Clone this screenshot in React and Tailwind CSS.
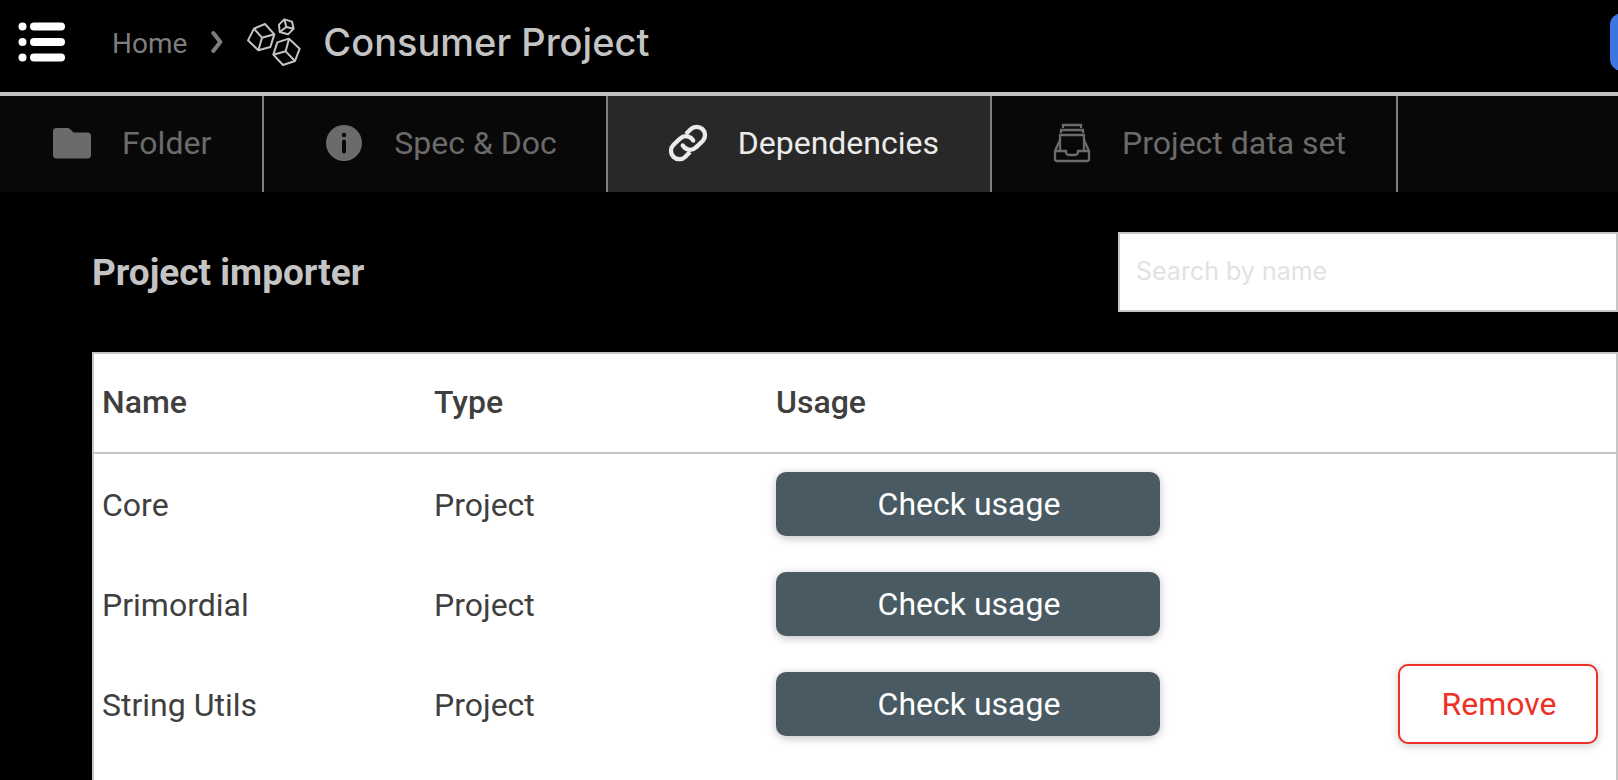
import { useState } from 'react';

const dependencies = [
  { name: 'Core', type: 'Project', removable: false },
  { name: 'Primordial', type: 'Project', removable: false },
  { name: 'String Utils', type: 'Project', removable: true },
];

const ListIcon = () => (
  <svg className="w-12 h-10" viewBox="0 0 48 40" fill="currentColor">
    <circle cx="4.5" cy="4.5" r="4" />
    <circle cx="4.5" cy="20" r="4" />
    <circle cx="4.5" cy="35.5" r="4" />
    <rect x="12" y="0.5" width="35" height="8" rx="4" />
    <rect x="12" y="16" width="35" height="8" rx="4" />
    <rect x="12" y="31.5" width="35" height="8" rx="4" />
  </svg>
);

const ChevronIcon = () => (
  <svg className="w-3 h-6" viewBox="0 0 12 24" fill="none" stroke="currentColor" strokeWidth="4" strokeLinecap="round" strokeLinejoin="round">
    <path d="M2.300 3l7 9l-7 9" />
  </svg>
);

const CubesIcon = () => (
  <svg className="w-14 h-12" viewBox="742 55 168 144" fill="none" stroke="currentColor" strokeWidth="6" strokeLinejoin="round">
    <path d="M763 87l33-14 28 31-12 38-36 10-31-30z" />
    <path d="M763 87l24 27 37-10M787 114l-11 38" />
    <path d="M868 117l32 30-14 37-36 12-29-31 12-37z" />
    <path d="M868 117l-10 38-37 10M858 155l28 29" />
    <path d="M854 59l23 7 5 21-17 17-25-7-2-22z" />
    <path d="M854 59l6 23 22 5M860 82l-20 15" />
  </svg>
);

const FolderIcon = () => (
  <svg className="w-10 h-10" viewBox="0 0 40 40" fill="currentColor">
    <path d="M4.500 5H15.500Q17 5 18 6L21.500 9.500H35.500Q39 9.500 39 13V32Q39 35.500 35.500 35.500H4.500Q1 35.500 1 32V8.500Q1 5 4.500 5z" />
  </svg>
);

const InfoIcon = () => (
  <svg className="w-10 h-10" viewBox="0 0 40 40">
    <circle cx="20" cy="20" r="18" fill="currentColor" />
    <circle cx="20" cy="12" r="2.200" fill="#080808" />
    <rect x="18" y="16.500" width="4" height="14" rx="2" fill="#080808" />
  </svg>
);

const LinkIcon = () => (
  <svg className="w-10 h-10" viewBox="54 36 120 120" fill="none" stroke="currentColor" strokeWidth="13">
    <path d="M108 69L122 55A25 25 0 0 1 158 90L138 109A25 25 0 0 1 98 103" />
    <path d="M120 123L106 137A25 25 0 0 1 70 102L90 83A25 25 0 0 1 130 89" />
    <g fill="currentColor" stroke="none">
      <circle cx="98" cy="103" r="6" />
      <circle cx="130" cy="89" r="6" />
    </g>
  </svg>
);

const TrayIcon = () => (
  <svg className="w-10 h-10" viewBox="0 0 40 40" fill="none" stroke="currentColor" strokeWidth="2.300">
    <path d="M11 5V2H29V5" />
    <path d="M9 10V7H31V10" />
    <path d="M8 28V12H32V28" />
    <path d="M8 17L3 28V36Q3 38 5 38H35Q37 38 37 36V28L32 17" />
    <path d="M3 28H14V30Q15 32 17 32H23Q25 32 26 30V28H37" />
  </svg>
);

const tabs = [
  { id: 'folder', label: 'Folder', icon: FolderIcon, padding: 'pl-[52px] pr-[51px]' },
  { id: 'spec', label: 'Spec & Doc', icon: InfoIcon, padding: 'pl-[60px] pr-[49px]' },
  { id: 'dependencies', label: 'Dependencies', icon: LinkIcon, padding: 'pl-[60px] pr-[51px]' },
  { id: 'dataset', label: 'Project data set', icon: TrayIcon, padding: 'pl-[60px] pr-[50px]' },
];

const Header = () => (
  <header className="flex items-center h-24 pb-2 pl-[18px] border-b-4 border-[#c0c2be] overflow-hidden">
    <button type="button" aria-label="Menu" className="text-white">
      <ListIcon />
    </button>
    <nav className="flex items-center flex-1 ml-[46px] text-[#7d7d7d]">
      <a href="#home" className="pt-[3px] text-[28px]">Home</a>
      <span className="ml-6"><ChevronIcon /></span>
      <span className="ml-6 text-[#c4c4c4]"><CubesIcon /></span>
      <h1 className="ml-5 font-[Inter,sans-serif] text-[38px] font-medium text-[#c4c4c4]">Consumer Project</h1>
    </nav>
    <button type="button" aria-label="Save" className="w-40 h-[58px] shrink-0 -mr-[152px] rounded-xl bg-[#3b76e1]" />
  </header>
);

const App = () => {
  const [activeTab, setActiveTab] = useState('dependencies');
  const [search, setSearch] = useState('');

  const rows = dependencies.filter((d) => d.name.toLowerCase().includes(search.toLowerCase()));

  return (
    <div className="flex flex-col h-screen overflow-hidden bg-black font-[Roboto,sans-serif] text-[32px] leading-10">
      <Header />

      {/* Tabs */}
      <div role="tablist" className="flex h-24 shrink-0 bg-[#080808]">
        {tabs.map(({ id, label, icon: Icon, padding }) => (
          <button
            key={id}
            type="button"
            role="tab"
            aria-selected={activeTab === id}
            onClick={() => setActiveTab(id)}
            className={`flex items-center gap-[30px] pb-0.5 border-r-2 border-[#808080] whitespace-nowrap ${padding} ${
              activeTab === id ? 'bg-[#282828] text-[#ebebeb]' : 'text-[#6b6b6b]'
            }`}
          >
            <Icon />
            {label}
          </button>
        ))}
      </div>

      <main className="flex flex-col flex-1 pl-[92px]">
        <div className="flex items-center justify-between py-10">
          <h2 className="pt-0.5 text-[37px] font-bold text-[#c4c4c4]">Project importer</h2>
          <input
            type="text"
            aria-label="Search by name"
            placeholder="Search by name"
            value={search}
            onChange={(e) => setSearch(e.target.value)}
            className="w-[500px] h-20 px-4 pb-0.5 border-2 border-[#c6c6c6] bg-white font-[Inter,sans-serif] text-[25px] text-[#3f3f3f] placeholder:text-[#e2e2e2] outline-none"
          />
        </div>

        {/* Dependency list */}
        <div className="flex-1 border-2 border-b-0 border-[#c6c6c6] bg-white text-[#3f3f3f]">
          <table className="w-full table-fixed border-separate border-spacing-0 text-left">
            <thead>
              <tr className="h-[100px]">
                <th className="w-[332px] pl-2 pb-0.5 border-b-2 border-[#c6c6c6] font-medium">Name</th>
                <th className="w-[350px] pl-2 pb-0.5 border-b-2 border-[#c6c6c6] font-medium">Type</th>
                <th className="pb-0.5 border-b-2 border-[#c6c6c6] font-medium">Usage</th>
                <th className="w-[300px] border-b-2 border-[#c6c6c6]" aria-label="Actions" />
              </tr>
            </thead>
            <tbody>
              {rows.map((dep) => (
                <tr key={dep.name} className="h-[100px]">
                  <td className="pl-2 pt-0.5">{dep.name}</td>
                  <td className="pl-2 pt-0.5">{dep.type}</td>
                  <td>
                    <button type="button" className="block w-96 h-16 pl-0.5 rounded-[10px] bg-[#4a5a62] text-white shadow-[0_2px_10px_rgba(0,0,0,0.25)]">
                      Check usage
                    </button>
                  </td>
                  <td className="pr-[18px]">
                    {dep.removable && (
                      <button type="button" className="block w-[200px] h-20 pl-0.5 ml-auto border-2 border-[#ee3124] rounded-[10px] bg-white text-[#ee3124] shadow-[0_2px_10px_rgba(0,0,0,0.2)]">
                        Remove
                      </button>
                    )}
                  </td>
                </tr>
              ))}
            </tbody>
          </table>
        </div>
      </main>
    </div>
  );
};

export default App;
